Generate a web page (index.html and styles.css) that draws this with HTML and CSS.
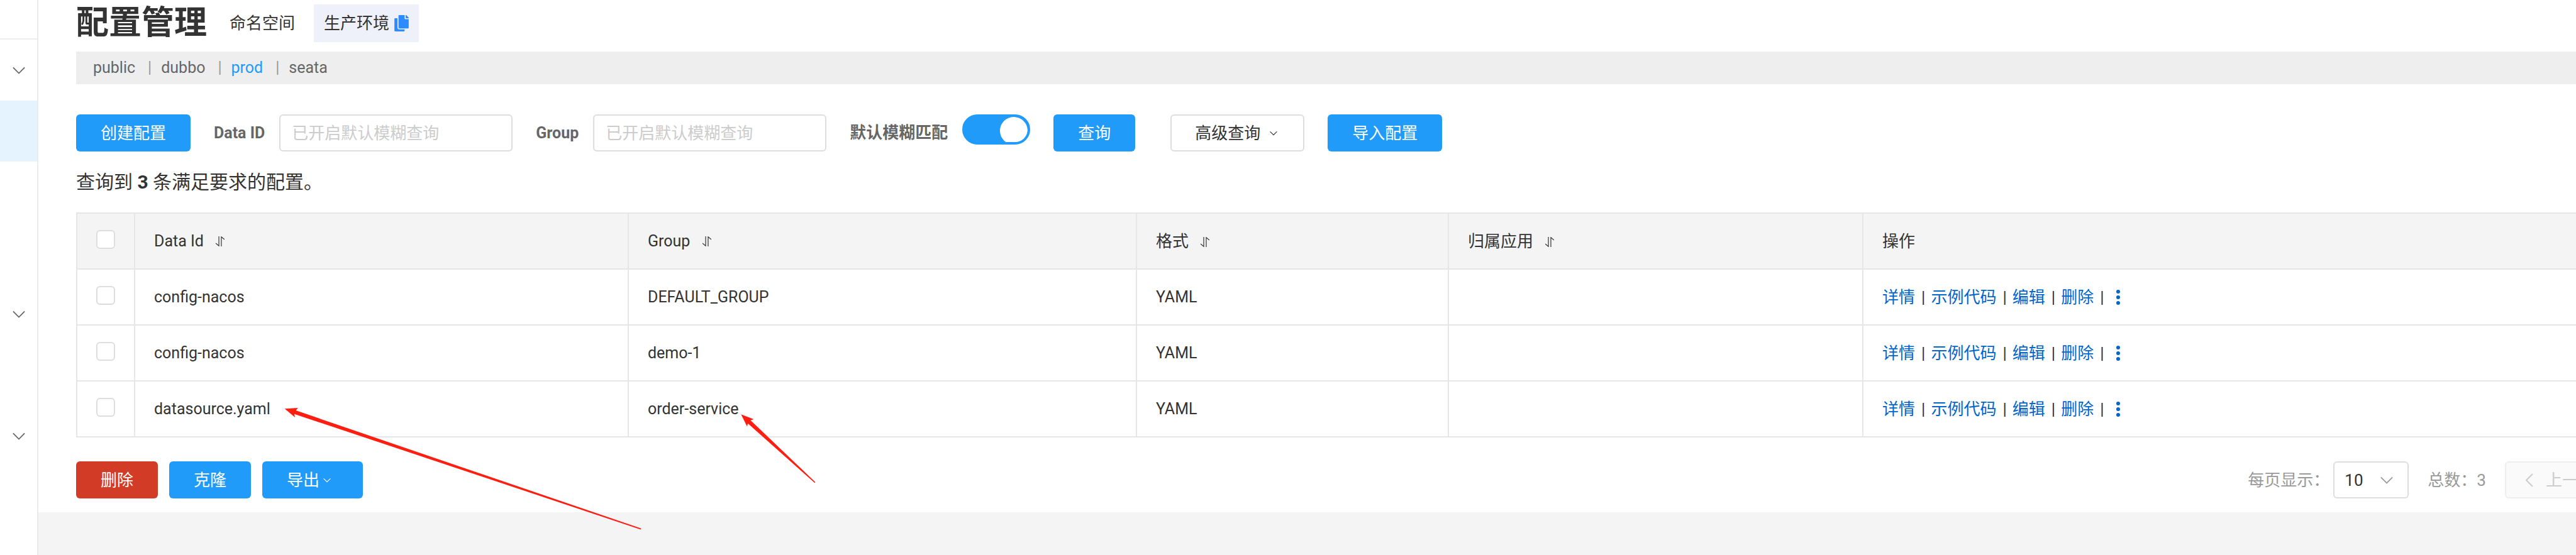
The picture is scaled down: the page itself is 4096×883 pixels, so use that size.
FILE: index.html
```html
<!DOCTYPE html>
<html lang="zh-CN">
<head>
  <meta charset="UTF-8" />
  <meta name="viewport" content="width=device-width, initial-scale=1.0" />
  <title>配置管理</title>
  <link rel="stylesheet" href="styles.css">
</head>
<body>
  <svg class="defs" aria-hidden="true">
    <symbol id="chevron" viewBox="0 0 22 12"><path d="M1 1l10 10L21 1" /></symbol>
    <symbol id="sort" viewBox="0 0 15 17"><path d="M5.4 0v16.2L0 11.8M9.6 17V.8l5.4 4.4" /></symbol>
    <symbol id="more" viewBox="0 0 26 26">
      <circle cx="13" cy="4" r="3" /><circle cx="13" cy="13" r="3" /><circle cx="13" cy="22" r="3" />
    </symbol>
  </svg>

  <div class="page">
    <nav class="sidebar">
      <div class="sidebar-head"></div>
      <ul class="menu">
        <li><svg class="chevron"><use href="#chevron" /></svg></li>
        <li class="active"></li>
        <li></li>
        <li></li>
        <li><svg class="chevron"><use href="#chevron" /></svg></li>
        <li></li>
        <li><svg class="chevron"><use href="#chevron" /></svg></li>
      </ul>
    </nav>

    <main class="main">
      <div class="content">
        <header class="title-bar">
          <h1>配置管理</h1>
          <span>命名空间</span>
          <span class="namespace-id">生产环境
            <svg class="copy" viewBox="0 0 448 512"><path d="M320 448v40c0 13.255-10.745 24-24 24H24c-13.255 0-24-10.745-24-24V120c0-13.255 10.745-24 24-24h72v296c0 30.879 25.121 56 56 56h168zm0-344V0H152c-13.255 0-24 10.745-24 24v368c0 13.255 10.745 24 24 24h272c13.255 0 24-10.745 24-24V128H344c-13.2 0-24-10.8-24-24zm120.971-31.029L375.029 7.029A24 24 0 0 0 358.059 0H352v96h96v-6.059a24 24 0 0 0-7.029-16.97z" /></svg>
          </span>
        </header>

        <div class="namespaces latin">
          <a href="#">public</a><i>|</i><a href="#">dubbo</a><i>|</i><a href="#" class="current">prod</a><i>|</i><a href="#">seata</a>
        </div>

        <form class="filters">
          <button type="button" class="btn primary">创建配置</button>
          <div class="field">
            <label for="dataId" class="latin">Data ID</label>
            <input type="text" id="dataId" placeholder="已开启默认模糊查询" />
          </div>
          <div class="field">
            <label for="group" class="latin">Group</label>
            <input type="text" id="group" placeholder="已开启默认模糊查询" />
          </div>
          <div class="field">
            <label for="fuzzy">默认模糊匹配</label>
            <input type="checkbox" id="fuzzy" class="switch" checked />
          </div>
          <button type="button" class="btn primary">查询</button>
          <button type="button" class="btn advanced">高级查询 <svg class="chevron small"><use href="#chevron" /></svg></button>
          <button type="button" class="btn primary">导入配置</button>
        </form>

        <p class="summary">查询到 <strong>3</strong> 条满足要求的配置。</p>

        <table class="configs">
          <colgroup>
            <col class="col-check"><col class="col-id"><col class="col-group"><col class="col-type"><col class="col-app"><col>
          </colgroup>
          <thead>
            <tr>
              <th><input type="checkbox" class="check" aria-label="全选" /></th>
              <th class="latin">Data Id <svg class="sort"><use href="#sort" /></svg></th>
              <th class="latin">Group <svg class="sort"><use href="#sort" /></svg></th>
              <th>格式 <svg class="sort"><use href="#sort" /></svg></th>
              <th>归属应用 <svg class="sort"><use href="#sort" /></svg></th>
              <th>操作</th>
            </tr>
          </thead>
          <tbody>
            <tr>
              <td><input type="checkbox" class="check" aria-label="config-nacos" /></td>
              <td class="latin">config-nacos</td>
              <td class="latin">DEFAULT_GROUP</td>
              <td class="latin">YAML</td>
              <td></td>
              <td>
                <div class="actions"><a href="#">详情</a><i>|</i><a href="#">示例代码</a><i>|</i><a href="#">编辑</a><i>|</i><a href="#">删除</a><i>|</i><a href="#" aria-label="更多"><svg class="more"><use href="#more" /></svg></a></div>
              </td>
            </tr>
            <tr>
              <td><input type="checkbox" class="check" aria-label="config-nacos" /></td>
              <td class="latin">config-nacos</td>
              <td class="latin">demo-1</td>
              <td class="latin">YAML</td>
              <td></td>
              <td>
                <div class="actions"><a href="#">详情</a><i>|</i><a href="#">示例代码</a><i>|</i><a href="#">编辑</a><i>|</i><a href="#">删除</a><i>|</i><a href="#" aria-label="更多"><svg class="more"><use href="#more" /></svg></a></div>
              </td>
            </tr>
            <tr>
              <td><input type="checkbox" class="check" aria-label="datasource.yaml" /></td>
              <td class="latin">datasource.yaml</td>
              <td class="latin">order-service</td>
              <td class="latin">YAML</td>
              <td></td>
              <td>
                <div class="actions"><a href="#">详情</a><i>|</i><a href="#">示例代码</a><i>|</i><a href="#">编辑</a><i>|</i><a href="#">删除</a><i>|</i><a href="#" aria-label="更多"><svg class="more"><use href="#more" /></svg></a></div>
              </td>
            </tr>
          </tbody>
        </table>

        <div class="table-footer">
          <div class="batch">
            <button type="button" class="btn danger">删除</button>
            <button type="button" class="btn primary">克隆</button>
            <button type="button" class="btn primary export">导出<svg class="chevron small"><use href="#chevron" /></svg></button>
          </div>
          <div class="pagination">
            <label for="pageSize">每页显示：</label>
            <div class="select">
              <select id="pageSize">
                <option>10</option>
                <option>20</option>
                <option>30</option>
              </select>
              <svg class="chevron"><use href="#chevron" /></svg>
            </div>
            <span class="total">总数：3</span>
            <button type="button" class="btn prev" disabled>
              <svg class="arrow-left" viewBox="0 0 12 22"><path d="M11 1L1 11l10 10" /></svg>上一页
            </button>
          </div>
        </div>
      </div>
    </main>

    <svg class="marks" aria-hidden="true">
      <polygon points="452.7,650.2 473.7,649 470.6,653.1 1019.3,840.7 1018.9,842.5 467.9,658.7 469.1,664.1" />
      <polygon points="1178.3,659.2 1198.5,666.9 1193.5,668.7 1296.5,767.2 1295.4,768.3 1189.2,673.7 1187.9,678.6" />
    </svg>
  </div>
</body>
</html>
```

FILE: styles.css
```css
* {
  box-sizing: border-box;
}

body {
  margin: 0;
  font-family: Roboto, 'Noto Sans CJK SC', sans-serif;
  font-size: 26px;
  line-height: 40px;
  color: #333;
  background: #f4f4f4;
}

a {
  color: #0066cc;
  text-decoration: none;
}

i {
  font-style: normal;
}

svg {
  flex: none;
  fill: none;
}

.latin {
  font-size: 25px;
}

.defs {
  position: absolute;
  width: 0;
  height: 0;
}

.page {
  position: relative;
  display: flex;
  min-height: 100vh;
  overflow: hidden;
}

/* sidebar */
.sidebar {
  flex: none;
  width: 61px;
  background: #fff;
  border-right: 2px solid #ebebeb;
}

.sidebar-head {
  height: 63px;
  border-bottom: 2px solid #eee;
}

.menu {
  margin: 0;
  padding: 0;
  list-style: none;
}

.menu li {
  display: flex;
  align-items: center;
  justify-content: center;
  height: 97px;
}

.menu .active {
  background: #e4f3fe;
}

.chevron {
  width: 20px;
  height: 12px;
  stroke: #666;
  stroke-width: 2;
}

.chevron.small {
  width: 12px;
  height: 8px;
  stroke: currentColor;
}

/* main */
.main {
  flex: 1;
  min-width: 0;
}

.content {
  margin-right: -63px;
  padding: 7px 0 22px 60px;
  background: #fff;
}

.title-bar {
  display: flex;
  align-items: center;
  height: 60px;
}

h1 {
  margin: 0 36px 0 0;
  font-size: 52px;
  line-height: 60px;
}

.namespace-id {
  display: flex;
  align-items: center;
  align-self: stretch;
  gap: 8px;
  margin-left: 30px;
  padding: 0 16px;
  background: #eef1fa;
}

.copy {
  width: 23px;
  height: 26px;
  fill: #2d8cff;
}

.namespaces {
  display: flex;
  align-items: center;
  height: 52px;
  margin-top: 15px;
  padding-left: 27px;
  background: #eee;
}

.namespaces a {
  color: #666;
}

.namespaces .current {
  color: #209bfa;
}

.namespaces i {
  margin: 0 15px 0 20px;
  color: #999;
}

.filters {
  display: flex;
  gap: 37px;
  margin-top: 48px;
}

.field {
  display: flex;
  gap: 23px;
}

.field label {
  color: #666;
  font-weight: bold;
  line-height: 59px;
}

.field input[type="text"] {
  width: 371px;
  height: 59px;
  padding: 0 18px;
  border: 2px solid #ddd;
  border-radius: 6px;
  font: inherit;
}

.field input::placeholder {
  color: #ccc;
}

.switch {
  appearance: none;
  display: flex;
  justify-content: flex-end;
  width: 108px;
  height: 48px;
  margin: 0;
  border: 4px solid #209bfa;
  border-radius: 24px;
  background: #209bfa;
  overflow: hidden;
}

.switch::before {
  content: '';
  flex: none;
  width: 44px;
  height: 44px;
  border-radius: 50%;
  background: #fff;
}

.btn {
  display: flex;
  align-items: center;
  height: 59px;
  padding: 0 39px;
  border: none;
  border-radius: 6px;
  font: inherit;
  color: #fff;
}

.primary {
  background: #209bfa;
}

.danger {
  background: #d23c26;
}

.advanced {
  gap: 15px;
  margin-left: 19px;
  padding: 0 41px 0 37px;
  border: 2px solid #ddd;
  background: #fff;
  color: #333;
}

.export {
  gap: 6px;
  padding-right: 51px;
}

.summary {
  margin: 29px 0 28px;
  font-size: 30px;
}

/* table */
.configs {
  width: 100%;
  table-layout: fixed;
  border-spacing: 0;
  border-top: 2px solid #e6e6e6;
}

.col-check {
  width: 92px;
}

.col-id {
  width: 785px;
}

.col-group {
  width: 808px;
}

.col-type {
  width: 496px;
}

.col-app {
  width: 659px;
}

.configs th,
.configs td {
  height: 89px;
  padding: 0 30px;
  border-left: 2px solid #e6e6e6;
  border-bottom: 2px solid #e6e6e6;
  font-weight: normal;
  text-align: left;
}

.configs th {
  background: #f4f4f4;
}

.configs tbody {
  background: #fff;
}

.check {
  appearance: none;
  display: block;
  width: 30px;
  height: 30px;
  margin: 0 0 5px;
  border: 2px solid #ddd;
  border-radius: 6px;
  background: #fff;
}

.sort {
  width: 14px;
  height: 16px;
  margin-left: 13px;
  stroke: #333;
  stroke-width: 1.3;
}

.actions {
  display: flex;
  align-items: center;
}

.actions a {
  display: flex;
}

.actions i {
  margin: 0 9px 0 10px;
}

.more {
  width: 26px;
  height: 26px;
  fill: #0066cc;
}

/* footer */
.table-footer {
  display: flex;
  justify-content: space-between;
  margin-top: 38px;
}

.batch {
  display: flex;
  gap: 18px;
}

.pagination {
  display: flex;
  align-items: center;
  color: #999;
}

.select {
  position: relative;
  margin: 0 30px 0 6px;
}

.select select {
  appearance: none;
  display: block;
  width: 120px;
  height: 59px;
  padding: 0 16px;
  border: 2px solid #ddd;
  border-radius: 6px;
  background: #fff;
  font: inherit;
  color: #333;
}

.select .chevron {
  position: absolute;
  top: 24px;
  right: 25px;
  stroke: #999;
  pointer-events: none;
}

.prev {
  gap: 20px;
  margin-left: 30px;
  padding: 0 31px;
  border: 2px solid #eee;
  background: #fafafa;
  color: #ccc;
}

.arrow-left {
  width: 12px;
  height: 22px;
  stroke: #ccc;
  stroke-width: 2;
}

/* red pointer arrows over the table */
.marks {
  position: absolute;
  top: 0;
  left: 0;
  width: 100%;
  height: 100%;
  fill: #ff1e10;
  pointer-events: none;
}
```
